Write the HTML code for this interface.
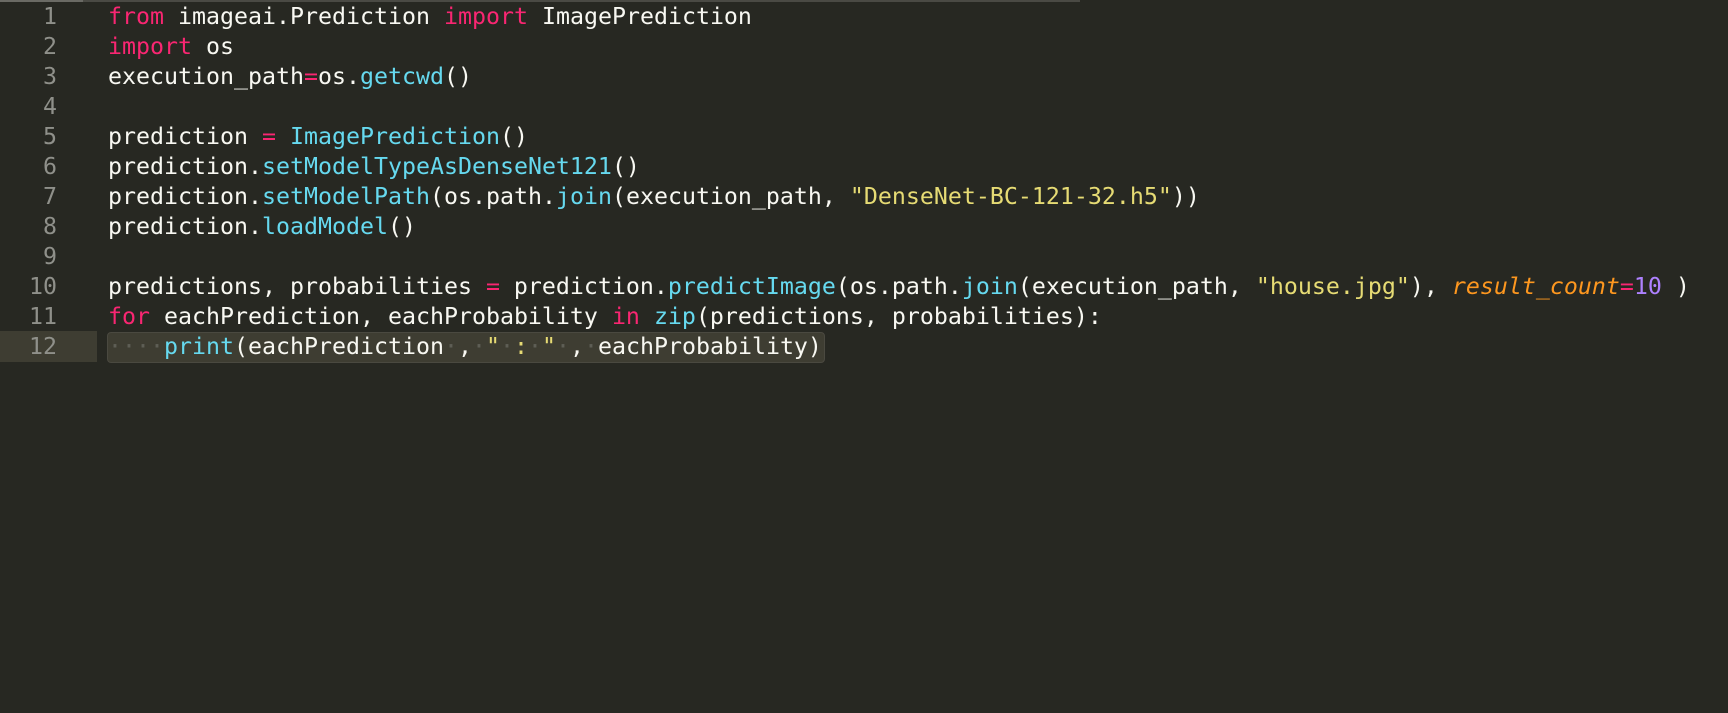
<!DOCTYPE html>
<html><head><meta charset="utf-8"><style>
html,body{margin:0;padding:0;background:#272822;width:1728px;height:713px;overflow:hidden}
.top{position:absolute;left:0;top:0;height:2px;width:1080px;background:#4a4a44}
.top2{position:absolute;left:0;top:0;height:2px;width:83px;background:#6a6a64}
.code{position:absolute;left:0;top:2px;font-family:"DejaVu Sans Mono","Liberation Mono",monospace;font-size:23.25px;line-height:30px;color:#f8f8f2;white-space:pre}
.ln{position:absolute;left:0;width:57px;text-align:right;color:#8f908a}
.tx{position:absolute;left:108px}
.k{color:#f92672}.f{color:#66d9ef}.s{color:#e6db74}.o{color:#fd971f;font-style:italic}.n{color:#ae81ff}.d{color:#5e5e55}
.gh{position:absolute;left:0;top:331px;width:97px;height:31px;background:#3e3d32}
.bx{position:absolute;left:107px;top:332px;width:716px;height:29px;background:#3e3d32;border:1px solid #4a4940;border-radius:4px}
</style></head><body>
<div class="top"></div><div class="top2"></div>
<div class="gh"></div><div class="bx"></div>
<div class="code">
<div class="ln" style="top:0">1</div><div class="tx" style="top:0"><span class="k">from</span> imageai.Prediction <span class="k">import</span> ImagePrediction</div>
<div class="ln" style="top:30px">2</div><div class="tx" style="top:30px"><span class="k">import</span> os</div>
<div class="ln" style="top:60px">3</div><div class="tx" style="top:60px">execution_path<span class="k">=</span>os.<span class="f">getcwd</span>()</div>
<div class="ln" style="top:90px">4</div>
<div class="ln" style="top:120px">5</div><div class="tx" style="top:120px">prediction <span class="k">=</span> <span class="f">ImagePrediction</span>()</div>
<div class="ln" style="top:150px">6</div><div class="tx" style="top:150px">prediction.<span class="f">setModelTypeAsDenseNet121</span>()</div>
<div class="ln" style="top:180px">7</div><div class="tx" style="top:180px">prediction.<span class="f">setModelPath</span>(os.path.<span class="f">join</span>(execution_path, <span class="s">"DenseNet-BC-121-32.h5"</span>))</div>
<div class="ln" style="top:210px">8</div><div class="tx" style="top:210px">prediction.<span class="f">loadModel</span>()</div>
<div class="ln" style="top:240px">9</div>
<div class="ln" style="top:270px">10</div><div class="tx" style="top:270px">predictions, probabilities <span class="k">=</span> prediction.<span class="f">predictImage</span>(os.path.<span class="f">join</span>(execution_path, <span class="s">"house.jpg"</span>), <span class="o">result_count</span><span class="k">=</span><span class="n">10</span> )</div>
<div class="ln" style="top:300px">11</div><div class="tx" style="top:300px"><span class="k">for</span> eachPrediction, eachProbability <span class="k">in</span> <span class="f">zip</span>(predictions, probabilities):</div>
<div class="ln" style="top:330px">12</div><div class="tx" style="top:330px"><span class="d">····</span><span class="f">print</span>(eachPrediction<span class="d">·</span>,<span class="d">·</span><span class="s">"<span class="d">·</span>:<span class="d">·</span>"</span><span class="d">·</span>,<span class="d">·</span>eachProbability)</div>
</div>
</body></html>
